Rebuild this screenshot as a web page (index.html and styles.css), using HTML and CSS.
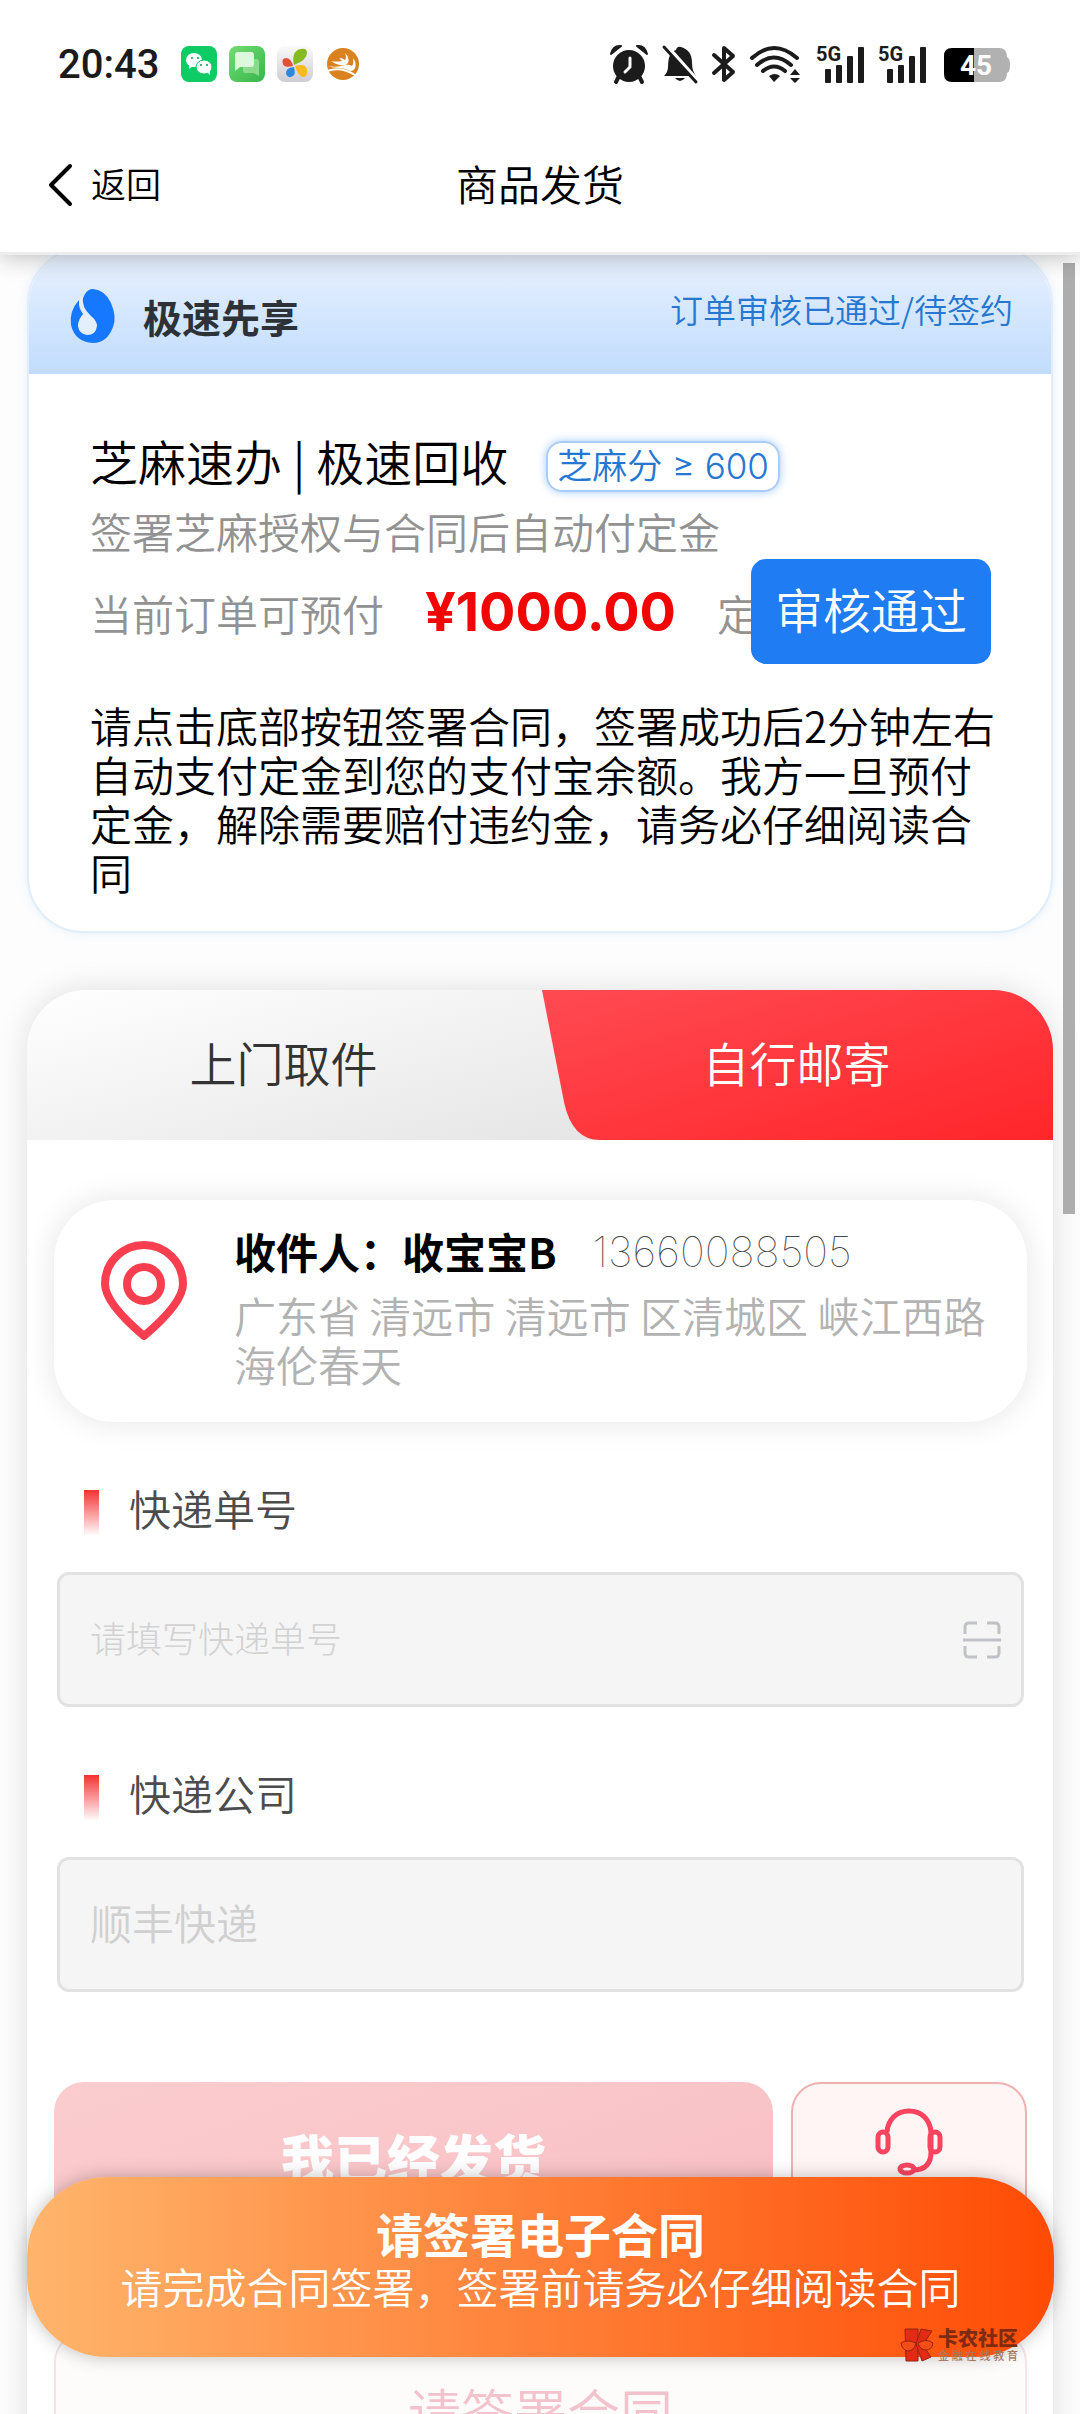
FILE: index.html
```html
<!DOCTYPE html>
<html lang="zh-CN">
<head>
<meta charset="utf-8">
<meta name="viewport" content="width=device-width, initial-scale=1">
<title>商品发货</title>
<link rel="stylesheet" href="styles.css">
</head>
<body>
<div class="app">
  <header class="top">
    <div class="status">
      <div class="status-left">
        <span class="clock">20:43</span>
        <svg class="app-icon" viewBox="0 0 36 36"><rect width="36" height="36" rx="8" fill="#0fcb66"/><ellipse cx="13" cy="14" rx="8" ry="7" fill="#fff"/><path d="M8 18l0 5 4-3z" fill="#fff"/><ellipse cx="23" cy="21" rx="8" ry="7" fill="#fff" stroke="#0fcb66"/><path d="M26 26l3 3v-4z" fill="#fff"/><g fill="#159552"><circle cx="11" cy="12" r="1"/><circle cx="17" cy="12" r="1"/><circle cx="20" cy="19" r="1"/><circle cx="26" cy="19" r="1"/></g></svg>
        <svg class="app-icon" viewBox="0 0 36 36"><defs><linearGradient id="msg" x1="0" y1="0" x2="1" y2="1"><stop offset="0" stop-color="#74dc70"/><stop offset="1" stop-color="#35b64c"/></linearGradient></defs><rect width="36" height="36" rx="8" fill="url(#msg)"/><path d="M14 13h13q3 0 3 3v14l-5-3H16q-2 0-2-3z" fill="#8cdb8c"/><path d="M9 6h13q3 0 3 3v9q0 3-3 3H11l-5 4V9q0-3 3-3z" fill="#dff7dc"/></svg>
        <svg class="app-icon" viewBox="0 0 36 36"><defs><linearGradient id="pin" x1="0" y1="0" x2="0" y2="1"><stop offset="0" stop-color="#fafafc"/><stop offset="1" stop-color="#cdccd2"/></linearGradient></defs><rect width="36" height="36" rx="8" fill="url(#pin)"/><path d="M17 19C15 10 17 4 24 3q6-1 6 4 0 7-13 12z" fill="#85bb20"/><path d="M16 20q-2-8-7-8-5 0-3 6 1 4 10 2z" fill="#e05138"/><path d="M17 21q-9 1-8 7 2 5 7 2 3-2 1-9z" fill="#2f86dd"/><path d="M18 20q11-3 12 4 1 7-4 7-5-1-8-11z" fill="#fbb91e"/></svg>
        <svg class="app-icon" viewBox="0 0 36 36"><circle cx="18" cy="18" r="16" fill="#d9821f"/><path d="M6 15q6 1 11 0-2-2-3-3 4 0 6 2 2-2 0-7 5 5 3 10-2 3-8 2-5-1-9-4z" fill="#fff"/><path d="M2 20q10 2 18-1 4-1 7 1 2-3 1-8 4 5 2 10-1 3-5 3-6-3-10-3-7 0-13-2z" fill="#fff"/><path d="M2 25q14-5 28 4" stroke="#fff" stroke-width="2" fill="none"/></svg>
      </div>
      <div class="status-right">
        <svg width="38" height="40" viewBox="0 0 38 40"><circle cx="19" cy="22" r="16" fill="#1b1b1b"/><path d="M9 32l-3 6M29 32l3 6" stroke="#1b1b1b" stroke-width="4" stroke-linecap="round"/><path d="M1 10Q3 1 11 2z M37 10Q35 1 27 2z" fill="#1b1b1b" stroke="#1b1b1b" stroke-width="2" stroke-linejoin="round"/><path d="M20 14v9l-5 5" stroke="#fff" stroke-width="3" fill="none" stroke-linecap="round"/></svg>
        <svg width="36" height="40" viewBox="0 0 36 40"><path d="M2 32q4-4 4-9 0-15 8-17 1-4 5-3 11 3 11 16 0 8 4 13zM13 34h10q-5 6-10 0z" fill="#1b1b1b"/><path d="M4 1l32 36" stroke="#fff" stroke-width="4"/><path d="M2 3l32 35" stroke="#1b1b1b" stroke-width="3" stroke-linecap="round"/></svg>
        <svg width="24" height="40" viewBox="0 0 24 40"><path d="M2 11l19 17-9 8V4l9 8L2 29" fill="none" stroke="#1b1b1b" stroke-width="4" stroke-linejoin="round" stroke-linecap="round"/></svg>
        <svg width="52" height="40" viewBox="0 0 52 40"><g fill="none" stroke="#1b1b1b" stroke-width="4" stroke-linecap="round"><path d="M2 14Q24-6 47 14M7 21q17-15 34 0M13 27q11-9 22 0"/></g><path d="M19 32q6-4 11 0l-6 6zM40 31l5-6 5 6zM40 34h10l-5 5z" fill="#1b1b1b"/></svg>
        <svg width="48" height="40" viewBox="0 0 48 40"><text x="0" y="17" class="net">5G</text><g fill="#1b1b1b"><rect x="9" y="25" width="6" height="14" rx="1"/><rect x="20" y="21" width="6" height="18" rx="1"/><rect x="31" y="12" width="6" height="27" rx="1"/><rect x="42" y="3" width="6" height="36" rx="1"/></g></svg>
        <svg width="48" height="40" viewBox="0 0 48 40"><text x="0" y="17" class="net">5G</text><g fill="#1b1b1b"><rect x="9" y="25" width="6" height="14" rx="1"/><rect x="20" y="21" width="6" height="18" rx="1"/><rect x="31" y="12" width="6" height="27" rx="1"/><rect x="42" y="3" width="6" height="36" rx="1"/></g></svg>
        <svg class="battery" width="66" height="40" viewBox="0 0 66 40"><path d="M8 4h47q8 0 8 9 3 1 3 8t-3 8q0 9-8 9H30V4z" fill="#b1b1b1"/><path d="M30 4v34H8q-8 0-8-8V12q0-8 8-8z" fill="#000"/><text x="32" y="31" class="level">45</text></svg>
      </div>
    </div>
    <nav class="nav">
      <a class="back" href="#"><svg width="26" height="44" viewBox="0 0 26 44"><path d="M23 3L4 22l19 19" fill="none" stroke="#000" stroke-width="4" stroke-linecap="round" stroke-linejoin="round"/></svg><span class="back-text">返回</span></a>
      <h1 class="title">商品发货</h1>
    </nav>
  </header>

  <main class="content">
    <section class="order">
      <div class="order-head">
        <svg width="44" height="54" viewBox="0 0 44 54"><path d="M22 0Q34 1 40 14 46 28 42 38 36 54 22 54 4 53 0 36-2 22 8 11 7 21 14 27 28 38 25 43 22 47 16 46 6 44 7 36 8 30 12 26L14 24Q8 14 14 5 17 0 22 0z" fill="#1677ff"/><path d="M9 9Q7 17 13 24 7 30 7 37 8 45 16 46 25 46 26 37 26 32 20 27 10 18 12 7z" fill="#e4effd"/></svg>
        <h2 class="brand">极速先享</h2>
        <span class="state">订单审核已通过/待签约</span>
      </div>
      <div class="order-body">
        <div class="order-title"><span>芝麻速办 | 极速回收</span><span class="score">芝麻分 ≥ 600</span></div>
        <p class="muted">签署芝麻授权与合同后自动付定金</p>
        <div class="prepay">
          <p class="muted prepay-text">当前订单可预付<strong class="price">¥1000.00</strong>定金</p>
          <button class="passed" type="button">审核通过</button>
        </div>
        <p class="notice">请点击底部按钮签署合同，签署成功后2分钟左右自动支付定金到您的支付宝余额。我方一旦预付定金，解除需要赔付违约金，请务必仔细阅读合同</p>
      </div>
    </section>

    <section class="ship">
      <div class="tabs">
        <button class="tab" type="button">上门取件</button>
        <button class="tab tab-on" type="button"><svg class="tab-shape" viewBox="0 0 513 150" preserveAspectRatio="none"><defs><linearGradient id="red" x1="0" y1="0" x2="1" y2="1"><stop offset="0" stop-color="#ff4a52"/><stop offset="1" stop-color="#ff262a"/></linearGradient></defs><path d="M2 0H513V150H60Q32 150 24 112z" fill="url(#red)"/></svg><span class="tab-label">自行邮寄</span></button>
      </div>
      <div class="ship-body">
        <div class="address">
          <svg class="pin" width="88" height="102" viewBox="0 0 88 102"><g fill="none" stroke="#f93f4f" stroke-width="8"><path d="M43 95Q4 62 4 43a39 39 0 0 1 78 0Q82 62 43 95z" stroke-linejoin="round"/><circle cx="43" cy="43" r="17"/></g></svg>
          <div class="address-text">
            <p class="person"><b>收件人：收宝宝B</b><span class="phone">13660088505</span></p>
            <p class="place">广东省 清远市 清远市 区清城区 峡江西路海伦春天</p>
          </div>
        </div>
        <div class="field">
          <label class="field-label" for="no">快递单号</label>
          <div class="box"><input class="box-input" id="no" type="text" placeholder="请填写快递单号"><svg width="38" height="38" viewBox="0 0 38 38"><path d="M2 13V6q0-4 4-4h8M24 2h8q4 0 4 4v7M36 25v7q0 4-4 4h-8M14 36H6q-4 0-4-4v-7M0 19h38" fill="none" stroke="#c0c2c7" stroke-width="3"/></svg></div>
        </div>
        <div class="field">
          <label class="field-label" for="co">快递公司</label>
          <div class="box"><input class="box-input box-large" id="co" type="text" value="顺丰快递"></div>
        </div>
        <div class="actions">
          <button class="sent" type="button">我已经发货</button>
          <button class="service" type="button" aria-label="客服"><svg width="66" height="66" viewBox="0 0 66 66"><g fill="none" stroke="#f94460" stroke-width="5"><path d="M11 23C12 10 21 2 33 2s21 8 22 21v20q0 18-18 18"/><rect x="2" y="23" width="10" height="20" rx="5"/><rect x="54" y="23" width="10" height="20" rx="5"/><ellipse cx="31" cy="60" rx="7" ry="4"/></g></svg></button>
        </div>
        <button class="sign" type="button">请签署合同</button>
      </div>
    </section>
  </main>

  <div class="scrollbar"></div>
  <button class="contract" type="button"><b class="contract-title">请签署电子合同</b><span>请完成合同签署，签署前请务必仔细阅读合同</span></button>
  <div class="mark">
    <svg width="34" height="34" viewBox="0 0 34 34"><g fill="#e22a14" stroke="#962410"><path d="M5 1h13v32H6z"/><path d="M21 1l11 2-9 14 8 12-9 4-6-17z"/><path d="M1 15q6-4 15 0-2 8-8 8-6-1-7-8zM18 15q8-5 15 0-1 7-7 7-6 0-8-7z" fill="#f44d18"/></g></svg>
    <div class="mark-text"><span class="mark-name">卡农社区</span><span class="mark-sub"><i>金</i><i>融</i><i>在</i><i>线</i><i>教</i><i>育</i></span></div>
  </div>
</div>
</body>
</html>
```
FILE: styles.css
```css
* { box-sizing: border-box; }
body, h1, h2, p { margin: 0; }
body {
  background: #fdfdfd;
  color: #000;
  font-family: "Noto Sans CJK SC", sans-serif;
  font-size: 42px;
  font-weight: 350;
  line-height: 49px;
}
button, input {
  border: 0;
  padding: 0;
  background: none;
  color: inherit;
  font: inherit;
}
svg { flex: none; display: block; overflow: visible; }

.app {
  position: relative;
  display: flex;
  flex-direction: column;
  height: 100vh;
  overflow: hidden;
}

/* status bar and navigation */
.top {
  position: relative;
  z-index: 2;
  background: #fff;
  border-bottom: 3px solid #ededed;
  box-shadow: 0 0 24px rgba(0, 0, 0, .3);
}
.status {
  display: flex;
  justify-content: space-between;
  align-items: center;
  padding: 40px 70px 0 58px;
  height: 88px;
}
.status-left, .status-right { display: flex; align-items: center; }
.status-left { gap: 12px; }
.status-right { gap: 14px; }
.battery { margin-left: 4px; }
.clock {
  margin-right: 10px;
  color: #1b1b1b;
  font-family: Roboto, sans-serif;
  font-size: 40px;
  font-weight: 500;
}
.app-icon { width: 36px; height: 36px; }
.net { font: 700 20px Roboto, sans-serif; fill: #1b1b1b; }
.level { font: 700 28px Roboto, sans-serif; fill: #fff; text-anchor: middle; }
.nav {
  display: grid;
  grid-template-columns: 1fr auto 1fr;
  align-items: center;
  height: 164px;
  padding: 30px 47px 0;
}
.back {
  display: flex;
  align-items: center;
  gap: 18px;
  color: #000;
  font-size: 35px;
  text-decoration: none;
}
.back-text { padding-bottom: 5px; }
.title { padding-bottom: 6px; font-size: 42px; font-weight: 350; }

/* order card */
.content {
  flex: 1;
  min-height: 0;
  overflow: hidden;
  padding: 0 27px;
  background: #fdfdfd;
}
.order {
  margin-top: -7px;
  border: 2px solid #e0edfb;
  border-radius: 56px;
  background: #fff;
  box-shadow: 0 0 8px rgba(160, 200, 250, .25);
  overflow: hidden;
}
.order-head {
  display: flex;
  align-items: center;
  height: 124px;
  padding: 8px 38px 0 42px;
  background: linear-gradient(#e9f2fe, #c1dcfd);
}
.brand {
  flex: 1;
  margin-left: 28px;
  color: #2c3238;
  font-size: 39px;
  font-weight: 700;
}
.state { margin-bottom: 14px; color: #2577d2; font-size: 33px; }
.order-body { padding: 56px 50px 35px 61px; }
.order-title {
  display: flex;
  align-items: center;
  gap: 38px;
  height: 60px;
  font-size: 48px;
}
.score {
  height: 51px;
  margin-top: 12px;
  padding: 0 9px;
  border: 2px solid #a9cdf8;
  border-radius: 16px;
  box-shadow: 0 0 8px rgba(22, 119, 255, .4);
  color: #2577d2;
  font-family: Inter, "Noto Sans CJK SC", sans-serif;
  font-size: 35px;
  line-height: 47px;
}
.muted { color: #929292; }
.order-title + .muted { margin-top: 16px; }
.prepay { position: relative; height: 105px; margin-top: 4px; }
.prepay-text { line-height: 105px; white-space: nowrap; }
.price {
  margin: 0 41px;
  color: #f20505;
  font-family: Inter, sans-serif;
  font-size: 54px;
  font-weight: 700;
}
.passed {
  position: absolute;
  top: 0;
  right: 10px;
  width: 240px;
  height: 105px;
  padding-bottom: 6px;
  border-radius: 15px;
  background: #207cf3;
  color: #fff;
  font-size: 48px;
}
.notice { margin-top: 36px; }

/* shipping panel */
.ship {
  margin-top: 57px;
  border-radius: 60px 60px 0 0;
  background: #fff;
  box-shadow: 0 0 32px rgba(0, 0, 0, .12);
}
.tabs {
  display: grid;
  grid-template-columns: 1fr 1fr;
  height: 150px;
  border-radius: 60px 60px 0 0;
  background: linear-gradient(165deg, #fff, #e2e2e2 80%);
  overflow: hidden;
}
.tab { position: relative; padding-bottom: 8px; color: #333; font-size: 47px; }
.tab-on { color: #fff; }
.tab-shape { position: absolute; inset: 0; width: 100%; height: 100%; }
.tab-label { position: relative; }
.ship-body { padding: 60px 26px 0 27px; }
.address {
  display: flex;
  align-items: flex-start;
  height: 222px;
  padding: 26px 20px 0 47px;
  border-radius: 60px;
  background: #fff;
  box-shadow: 0 0 32px rgba(0, 0, 0, .1);
}
.pin { margin-top: 15px; }
.address-text { flex: 1; margin-left: 45px; }
.person { display: flex; gap: 36px; }
.phone {
  padding-top: 3px;
  color: #444;
  font-family: Inter, sans-serif;
  font-size: 42px;
  font-weight: 100;
  line-height: 46px;
}
.place { margin-top: 15px; color: #b2b2b2; font-weight: 350; }
.field { margin-top: 61px; padding: 0 3px; }
.field-label {
  display: flex;
  align-items: center;
  gap: 30px;
  height: 49px;
  padding-left: 27px;
  color: #4c4c4c;
}
.field-label::before {
  content: "";
  width: 15px;
  height: 46px;
  margin-top: 10px;
  background: linear-gradient(#f43232, #fff);
}
.box {
  display: flex;
  align-items: center;
  height: 135px;
  margin-top: 40px;
  padding: 0 20px 0 30px;
  border: 3px solid #e2e2e2;
  border-radius: 12px;
  background: #f5f5f5;
}
.box-input {
  flex: 1;
  min-width: 0;
  height: 66px;
  padding-bottom: 6px;
  color: #d0d0d0;
  font-size: 36px;
}
.box-input::placeholder { color: #d2d2d2; font-weight: 300; opacity: 1; }
.box-large { font-size: 42px; }
.actions {
  display: grid;
  grid-template-columns: 720fr 236fr;
  gap: 18px;
  height: 156px;
  margin-top: 90px;
}
.sent {
  padding-bottom: 6px;
  border-radius: 30px;
  background: linear-gradient(160deg, #fbcdcf, #f8bfc3);
  color: #fff;
  font-size: 53px;
  font-weight: 900;
}
.service {
  display: flex;
  justify-content: center;
  padding-top: 25px;
  border: 2px solid #efb0b0;
  border-radius: 30px;
  background: #fff5f5;
}
.sign {
  width: 100%;
  height: 162px;
  margin-top: 94px;
  padding-bottom: 4px;
  border: 2px solid #f5e4e4;
  border-radius: 30px;
  background: #fdfcfa;
  color: #f3c3cd;
  font-size: 53px;
}

/* floating layer */
.scrollbar {
  position: absolute;
  z-index: 1;
  top: 263px;
  right: 5px;
  width: 12px;
  height: 951px;
  background: #adadad;
}
.contract {
  position: absolute;
  z-index: 1;
  left: 27px;
  right: 26px;
  bottom: 57px;
  display: flex;
  flex-direction: column;
  align-items: center;
  justify-content: center;
  gap: 4px;
  height: 180px;
  padding-bottom: 16px;
  border-radius: 80px;
  background: linear-gradient(90deg, #ffb56c, #ff4b04);
  box-shadow: 0 0 18px rgba(0, 0, 0, .25);
  color: #fff;
}
.contract-title { font-size: 47px; font-weight: 700; }
.mark {
  position: absolute;
  z-index: 2;
  right: 62px;
  bottom: 52px;
  display: flex;
  gap: 4px;
}
.mark-text { display: flex; flex-direction: column; width: 80px; }
.mark-name { color: #7e2b12; font-size: 20px; font-weight: 900; line-height: 20px; }
.mark-sub {
  display: flex;
  justify-content: space-between;
  color: #a5795f;
  font-size: 11px;
  font-weight: 500;
  line-height: 14px;
}
.mark-sub i { font-style: normal; }
```
